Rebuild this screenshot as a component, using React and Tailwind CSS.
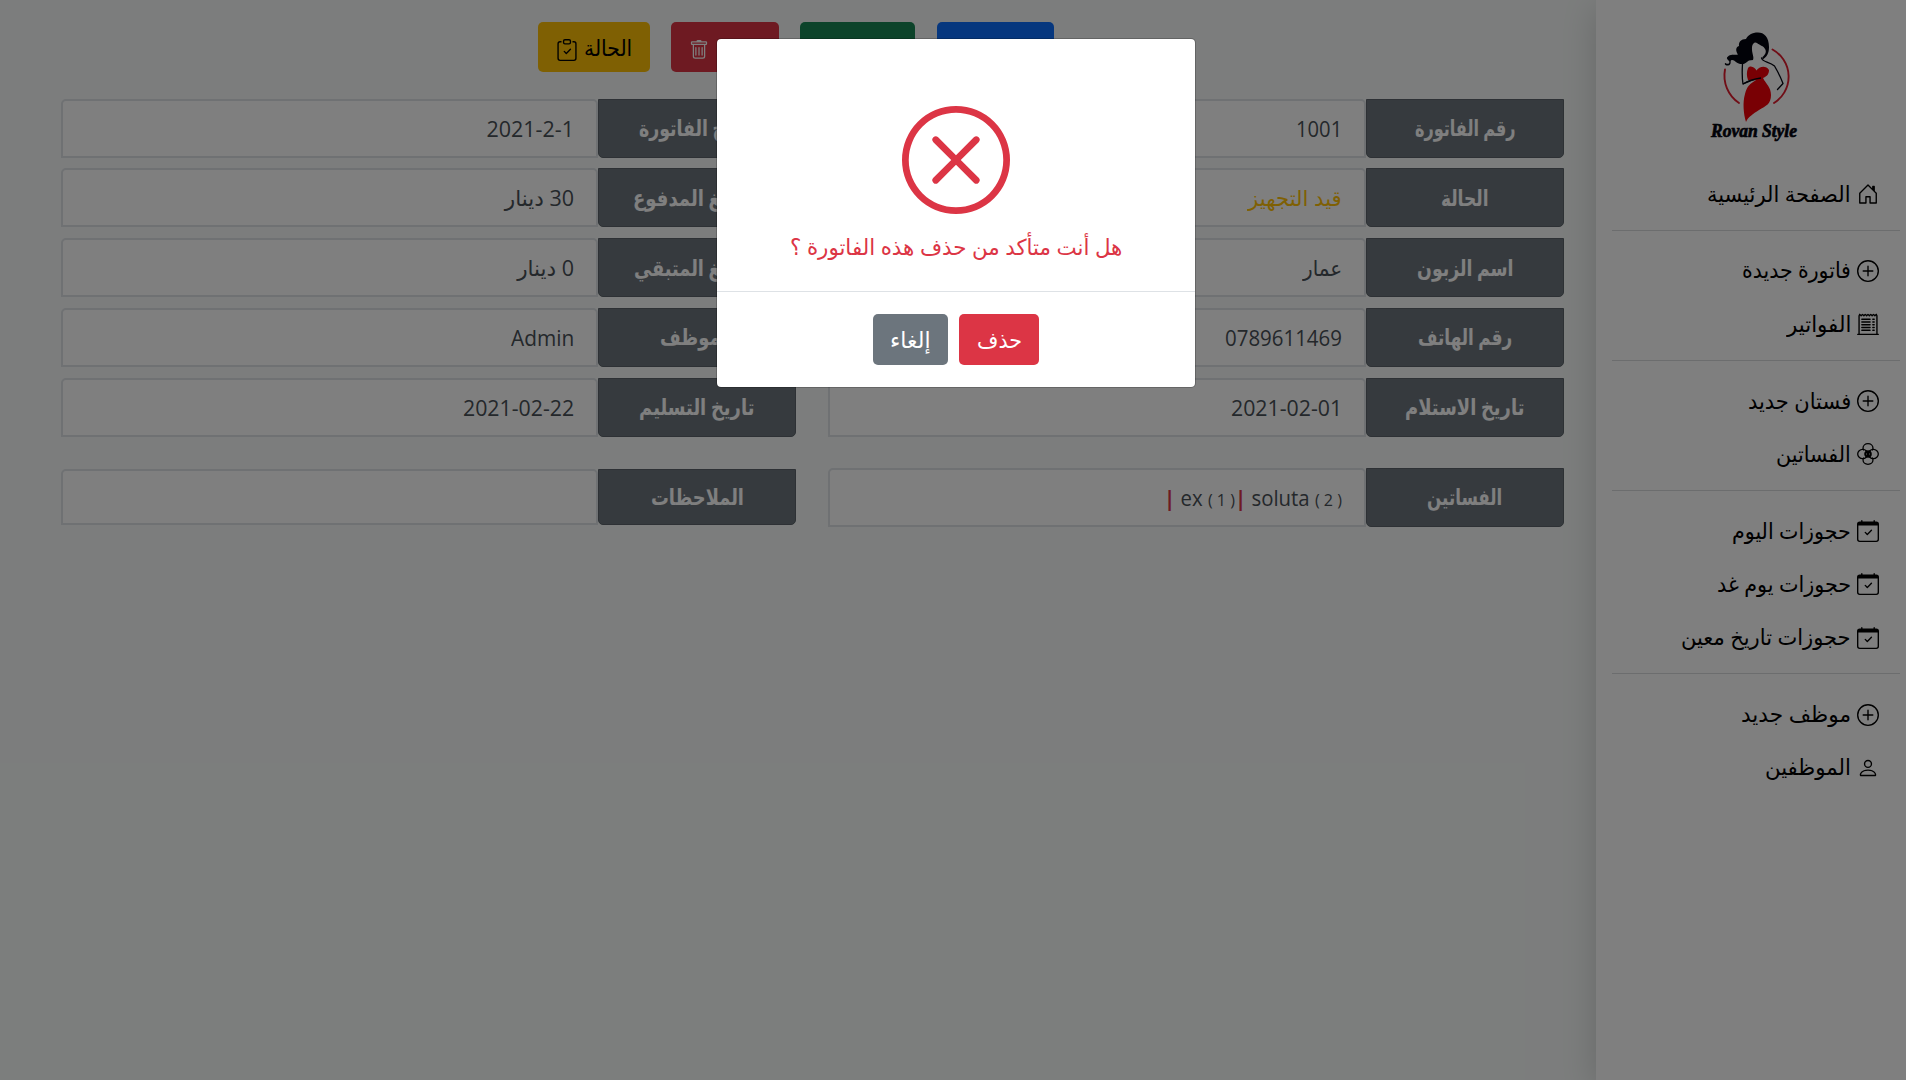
import React, { useLayoutEffect, useRef } from "react";
import {
  BsHouseDoor, BsPlusCircle, BsReceiptCutoff, BsCalendarCheck,
  BsPerson, BsTrash, BsClipboardCheck, BsXCircle,
} from "react-icons/bs";

/* Text run condensed or widened horizontally to a given width. */
function Fit({ w, children, className = "" }) {
  const box = useRef(null);
  const run = useRef(null);
  useLayoutEffect(() => {
    const natural = run.current.offsetWidth;
    box.current.style.width = w + "px";
    run.current.style.transform = `scaleX(${w / natural})`;
  }, [w]);
  return (
    <span ref={box} dir="rtl" className={`inline-block whitespace-nowrap ${className}`}>
      <span ref={run} className="inline-block origin-right">{children}</span>
    </span>
  );
}

function Flower({ className }) {
  return (
    <svg viewBox="0 0 22 22" className={className} fill="none" stroke="currentColor" strokeWidth="1.3">
      <path d="M6.800 7.300A5 5 0 0 1 6 5.200C6 2.500 8.200 0.700 11 0.700S16 2.500 16 5.200A5 5 0 0 1 15.200 7.300" />
      <path d="M6.800 14.700A5 5 0 0 0 6 16.800C6 19.500 8.200 21.300 11 21.300S16 19.500 16 16.800A5 5 0 0 0 15.200 14.700" />
      <ellipse cx="5.700" cy="11" rx="5" ry="4.700" />
      <ellipse cx="16.300" cy="11" rx="5" ry="4.700" />
      <circle cx="11" cy="11" r="2.700" strokeWidth="2.200" />
    </svg>
  );
}

const sections = [
  [[BsHouseDoor, "الصفحة الرئيسية", 144]],
  [[BsPlusCircle, "فاتورة جديدة", 109], [BsReceiptCutoff, "الفواتير", 64]],
  [[BsPlusCircle, "فستان جديد", 103], [Flower, "الفساتين", 75]],
  [[BsCalendarCheck, "حجوزات اليوم", 119], [BsCalendarCheck, "حجوزات يوم غد", 134], [BsCalendarCheck, "حجوزات تاريخ معين", 170]],
  [[BsPlusCircle, "موظف جديد", 110], [BsPerson, "الموظفين", 86]],
];

function Logo() {
  return (
    <svg width="130" height="130" viewBox="0 0 130 130" className="block" direction="ltr">
      <g fill="none" stroke="#e11d2e" strokeWidth="1.9" strokeLinecap="round">
        <path d="M82.500 29.500A31 31 0 0 1 84 83" />
        <path d="M35 49.500A33 33 0 0 0 49 83" />
      </g>
      <path fill="#03040f" d="M79 27C79 17 74 12.500 68 12.500C62 12.500 58 15 56 19C51 19 48.500 22 49 26C45.500 27 45.500 31 48 34.500C44 35 40 34 38 36.500C35 38.500 39 40 39.500 42C39 44 37.500 44.500 35.500 43C33.500 44 36 46 38 45.500C42 45 40 41 41 40.500C44 38.500 47 45 51.500 44C54 45 57 42 59 40.500L63 40C64.500 37 61.500 33 62 27C62.500 23 65 21.500 67 23C69 25 74 26 75 29C76.500 31 76 34 72.500 37L72 40C77 37 79 33 79 27Z" />
      <path fill="none" stroke="#03040f" strokeWidth="1.3" strokeLinejoin="round" strokeLinecap="round" d="M52.500 44C52 52 52 58 53 64C57 62 62 59.500 70 58M71.500 38C72 42 79 41.500 84.500 46C88 52 91 58 93 63.500L87.500 69.500" />
      <path fill="#f20008" d="M58 48C61 44.500 65 48 66.500 50.500C69 46.500 76 45 79 50C79 53 78 56 73 58C76 64 81 67 81 75C81 84 76 86 69 90C63 94 58 97 56 102C53.500 94 52.500 82 55 74C57 66 60 64 66 60C62 60 59.500 60 58 60C56.500 56 56.500 52 58 48Z" />
      <path fill="none" stroke="#03040f" strokeWidth="1.3" d="M53 64C57 61.500 63 59 71 58" />
      <text x="21" y="117" textLength="86" lengthAdjust="spacingAndGlyphs" fill="#03040f" stroke="#03040f" strokeWidth="0.7" fontFamily="'Liberation Serif', serif" fontWeight="bold" fontStyle="italic" fontSize="18">Rovan Style</text>
    </svg>
  );
}

function Sidebar() {
  return (
    <aside className="relative h-[1080px] w-[310px] shrink-0 bg-white pr-1.5 pl-4 shadow-[0_8px_32px_rgba(0,0,0,0.17)]">
      <div className="flex h-[167.500px] pt-5 pr-[80px]"><Logo /></div>
      {sections.map((items, i) => (
        <div key={i}>
          {i > 0 && <hr className="mt-[9px] mb-[13.600px] border-t border-[#d9dbdc]" />}
          {items.map(([Icon, label, w]) => (
            <div key={label} className="flex h-[53.250px] items-center gap-1.5 pr-[21px] text-black">
              <Icon className="size-[22px]" />
              <Fit w={w} className="pb-[3px] text-[22px] leading-8">{label}</Fit>
            </div>
          ))}
        </div>
      ))}
    </aside>
  );
}

const rightRows = [
  ["رقم الفاتورة", 101, "1001", 46],
  ["الحالة", 48, "قيد التجهيز", 94, "text-[#ffc107]"],
  ["اسم الزبون", 96, "عمار", 39],
  ["رقم الهاتف", 94, "0789611469", 117],
  ["تاريخ الاستلام", 119, "2021-02-01", 111],
];
const leftRows = [
  ["تاريخ الفاتورة", 116, "2021-2-1", 88],
  ["المبلغ المدفوع", 128, "30 دينار", 69],
  ["المبلغ المتبقي", 126, "0 دينار", 57],
  ["الموظف", 74, "Admin", 63],
  ["تاريخ التسليم", 115, "2021-02-22", 111],
];

function Field({ label, labelWidth, children, height = "h-[59px]" }) {
  return (
    <div className={`flex ${height}`}>
      <div className="flex w-[198px] items-center justify-center rounded-b-[5px] border border-[#5c636a] bg-[#6c757d] pb-0.5 text-[22px] font-bold leading-8 text-white">
        <Fit w={labelWidth}>{label}</Fit>
      </div>
      <div className="flex flex-1 items-center rounded-t-[5px] border-2 border-[#dee2e6] bg-white px-[22px] pt-px text-[21.500px] leading-8 text-[#495057]">
        {children}
      </div>
    </div>
  );
}

function Column({ rows, width, children }) {
  return (
    <div className={width}>
      <div className="flex flex-col gap-[10.750px]">
        {rows.map(([label, lw, value, vw, color = ""]) => (
          <Field key={label} label={label} labelWidth={lw}>
            <Fit w={vw} className={color}>{value}</Fit>
          </Field>
        ))}
      </div>
      {children}
    </div>
  );
}

export default function App() {
  return (
    <div dir="rtl" className="relative flex h-[1080px] w-[1906px] overflow-hidden bg-[#f8fbfa] font-['Open_Sans','Noto_Sans','DejaVu_Sans',sans-serif]">
      <Sidebar />
      <main className="flex-1 pt-[22px] pr-8">
        <div className="flex h-[50px] pr-[510px] text-[22px] leading-8">
          <button className="w-[117px] rounded-[5px] bg-[#0d6efd]" />
          <button className="mr-[22px] w-[115px] rounded-[5px] bg-[#198754]" />
          <button className="mr-[21px] flex w-[108px] items-center gap-2 rounded-[5px] bg-[#dc3545] pr-[17px] text-white"><Fit w={45}>حذف</Fit><BsTrash className="mt-1.5 size-5" /></button>
          <button className="mr-[21px] flex w-[112px] items-center gap-1.5 rounded-[5px] bg-[#ffc107] pr-[18px] text-black"><Fit w={48}>الحالة</Fit><BsClipboardCheck className="mt-1.5 size-[22px]" /></button>
        </div>
        <div className="mt-[26.600px] flex gap-8">
          <Column rows={rightRows} width="w-[736px]">
            <div className="mt-[31.200px]">
              <Field label="الفساتين" labelWidth={75}>
                <Fit w={178} className="pt-0.5">
                  <bdi dir="ltr"><b className="text-[#dc3545]">|</b> ex <span className="text-[17px]">( 1 )</span><b className="text-[#dc3545]">|</b> soluta <span className="text-[17px]">( 2 )</span></bdi>
                </Fit>
              </Field>
            </div>
          </Column>
          <Column rows={leftRows} width="w-[735px]">
            <div className="mt-[32.400px]"><Field label="الملاحظات" labelWidth={93} height="h-14" /></div>
          </Column>
        </div>
      </main>
      <div className="absolute inset-0 flex justify-center bg-black/50 pt-[38px] pl-[6px]">
        <div className="flex h-[350px] w-[480px] flex-col rounded-[5px] border border-black/20 bg-white bg-clip-padding">
          <div className="flex h-[252px] flex-col items-center pt-[67px] text-[#dc3545]">
            <BsXCircle className="size-[108px]" />
            <Fit w={332} className="mt-4 text-[22px] leading-8">هل أنت متأكد من حذف هذه الفاتورة ؟</Fit>
          </div>
          <div className="flex flex-1 justify-center gap-[11px] border-t border-[#dee2e6] pt-[22px] text-[22px] leading-8 text-white">
            <button className="flex h-[51px] w-20 items-center justify-center rounded-[5px] bg-[#dc3545] pb-0.5"><Fit w={45}>حذف</Fit></button>
            <button className="flex h-[51px] w-[75px] items-center justify-center rounded-[5px] bg-[#6c757d] pb-0.5"><Fit w={40}>إلغاء</Fit></button>
          </div>
        </div>
      </div>
    </div>
  );
}
